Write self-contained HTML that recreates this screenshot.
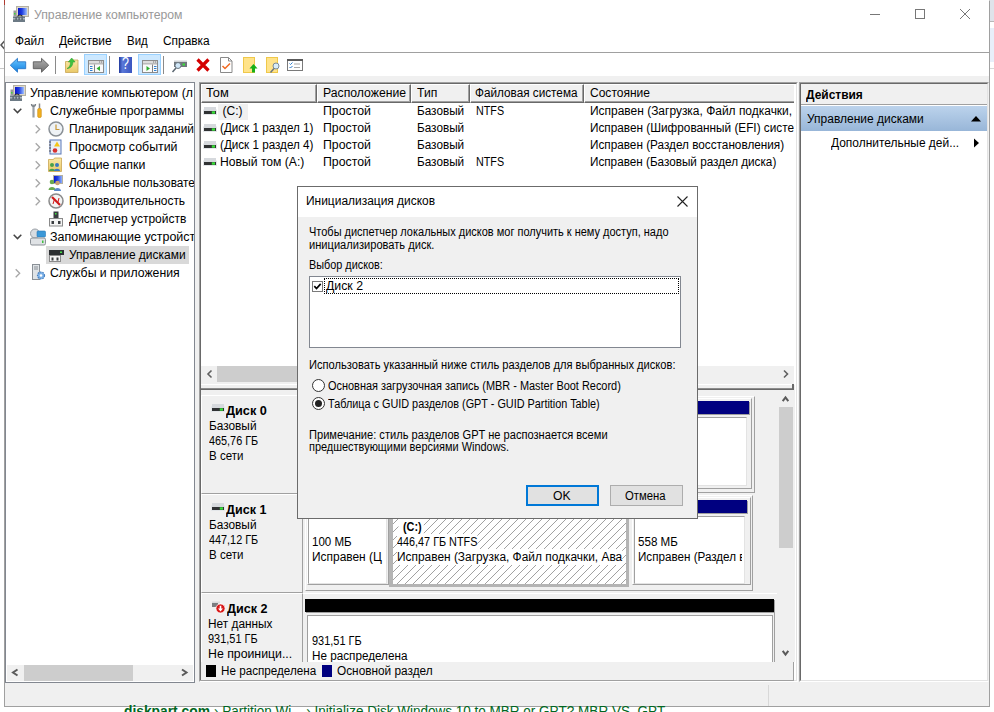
<!DOCTYPE html>
<html lang="ru"><head><meta charset="utf-8"><title>Управление компьютером</title>
<style>
html,body{margin:0;padding:0}
body{width:994px;height:712px;overflow:hidden;background:#fff;position:relative;font-family:"Liberation Sans",sans-serif;font-size:12px;color:#000}
div,span,svg{position:absolute;box-sizing:border-box}
.t{white-space:nowrap;line-height:16px;transform-origin:0 50%;font-size:12px}
.ttl{color:#999}
.b{font-weight:bold}
.d{font-size:12px}
.g{font-size:14px;color:#006621}
.gb{font-weight:bold}
.c{overflow:hidden}
.f0{background:#f0f0f0}
.sunk{border:1px solid;border-color:#a0a0a0 #fff #fff #a0a0a0}
.sunk2{border:1px solid;border-color:#696969 #e3e3e3 #e3e3e3 #696969}
.hl{background:#f0f0f0;border-right:1px solid #a0a0a0}
.hc{background:#f0f0f0;border:1px solid;border-color:#fff #696969 #696969 #fff;box-shadow:inset -1px -1px 0 #a0a0a0}
.thumb{background:#cdcdcd}
.navy{background:#000080}
</style></head><body>
<!-- background outside the window -->
<div style="left:990px;top:0;width:4px;height:22px;background:#dfe3ea;border-bottom:1px solid #b8b8b8"></div>
<div style="left:990px;top:28px;width:4px;height:34px;background:#e8effa"></div>
<div style="left:990px;top:68px;width:4px;height:1px;background:#d8d8d8"></div>
<div style="left:0;top:68px;width:4px;height:1px;background:#c8c8c8"></div>
<svg style="left:0;top:40px;width:4px;height:10px" viewBox="0 0 4 10"><path d="M4.500 1L1 5l3.500 4" stroke="#555" stroke-width="1.500" fill="none"/></svg>
<!-- window -->
<div id="win" style="left:4px;top:0;width:986px;height:707px;border:1px solid #a0a0a0;border-top-color:#fff;background:#fff"></div>
<div style="left:4px;top:0;width:1px;height:5px;background:#b03a30"></div>
<div style="left:5px;top:52px;width:984px;height:1px;background:#a0a0a0"></div>
<div class="f0" style="left:5px;top:76px;width:984px;height:630px"></div>
<!-- window controls -->
<svg style="left:860px;top:0;width:130px;height:30px" viewBox="0 0 130 30"><g stroke="#777" stroke-width="1" fill="none"><path d="M10 14.5h10"/><rect x="55.5" y="9.5" width="9" height="9"/><path d="M100 9l10 10M110 9l-10 10"/></g></svg>
<!-- tree panel -->
<div style="left:5px;top:82px;width:190px;height:601px;border:1px solid #828790;background:#fff"></div>
<div style="left:46px;top:246px;width:143px;height:18px;background:#d9d9d9"></div>
<div class="f0" style="left:7px;top:665px;width:186px;height:16px"></div>
<div class="thumb" style="left:24px;top:665px;width:109px;height:16px"></div>
<svg style="left:7px;top:665px;width:186px;height:16px" viewBox="0 0 186 16"><g stroke="#5a5a5a" stroke-width="2" fill="none"><path d="M10.500 4.500L6 7.500l4.500 3"/><path d="M175 4.500l4.500 3-4.500 3"/></g></svg>
<!-- middle panel -->
<div class="sunk" style="left:199px;top:82px;width:599px;height:600px"></div>
<div class="sunk2" style="left:200px;top:83px;width:597px;height:598px;background:#fff"></div>
<!-- table header -->
<div class="c" style="left:201px;top:84px;width:593px;height:19px">
<div class="hc" style="left:0px;top:0;width:116px;height:19px"></div>
<div class="hc" style="left:116px;top:0;width:94px;height:19px"></div>
<div class="hc" style="left:210px;top:0;width:59px;height:19px"></div>
<div class="hc" style="left:269px;top:0;width:114px;height:19px"></div>
<div class="hc" style="left:383px;top:0;width:316px;height:19px"></div>
</div>
<div style="left:218px;top:104px;width:30px;height:16px;background:#f0f0f0"></div>
<!-- table h-scrollbar -->
<div class="f0" style="left:201px;top:366px;width:593px;height:18px"></div>
<div class="thumb" style="left:217px;top:366px;width:330px;height:16px"></div>
<svg style="left:201px;top:366px;width:593px;height:16px" viewBox="0 0 593 16"><g stroke="#606060" stroke-width="1.6" fill="none"><path d="M10.5 4.500L7 8l3.500 3.500"/><path d="M583 4.500l3.500 3.500L583 11.500"/></g></svg>
<!-- splitter -->
<div style="left:201px;top:384px;width:594px;height:7px;background:#f0f0f0;border-top:1px solid #fff"></div>
<div style="left:201px;top:388px;width:593px;height:2px;background:#696969;border-top:1px solid #8c8c8c"></div>
<div style="left:792px;top:384px;width:2px;height:6px;background:#696969"></div>
<!-- bottom pane -->
<div class="f0" style="left:201px;top:390px;width:594px;height:272px"></div>
<div id="bp" class="c" style="left:201px;top:390px;width:576px;height:272px">
 <!-- coordinates relative to (201,390) -->
 <!-- disk 0 -->
 <div style="left:0;top:5px;width:102px;height:99px;border:1px solid;border-color:#fff #a0a0a0 #a0a0a0 #fff"></div>
 <div style="left:426px;top:6px;width:128px;height:97px;border:1px solid;border-color:#fff #a0a0a0 #a0a0a0 #fff"></div>
 <div style="left:428px;top:8px;width:123px;height:91px;border:1px solid;border-color:#fff #a0a0a0 #a0a0a0 #fff"></div>
 <div class="navy" style="left:430px;top:11px;width:118px;height:13px;box-shadow:1px 1px 0 #a0a0a0"></div>
 <div style="left:430px;top:27px;width:116px;height:69px;background:#fff;border:1px solid;border-color:#a0a0a0 #e3e3e3 #e3e3e3 #a0a0a0"></div>
 <!-- disk 1 -->
 <div style="left:0;top:104px;width:102px;height:99px;border:1px solid;border-color:#fff #a0a0a0 #a0a0a0 #fff"></div>
 <div style="left:104px;top:105px;width:448px;height:96px;border:1px solid;border-color:#fff #a0a0a0 #a0a0a0 #fff"></div>
 <div style="left:106px;top:107px;width:82px;height:88px;border:1px solid;border-color:#fff #a0a0a0 #a0a0a0 #fff"></div>
 <div class="navy" style="left:108px;top:110px;width:77px;height:13px"></div>
 <div style="left:107px;top:126px;width:79px;height:68px;background:#fff;border:1px solid;border-color:#a0a0a0 #e3e3e3 #e3e3e3 #a0a0a0"></div>
 <div style="left:188px;top:106px;width:240px;height:91px;background:#b4b4b4"></div>
 <div class="navy" style="left:192px;top:110px;width:233px;height:13px"></div>
 <svg style="left:192px;top:126px;width:233px;height:68px" viewBox="0 0 233 68"><defs><pattern id="hat" width="8" height="8" patternUnits="userSpaceOnUse"><rect width="8" height="8" fill="#fff"/><path d="M-1 9L9 -1M-1 1L1 -1M7 9L9 7" stroke="#969696" stroke-width=".9"/></pattern></defs><rect width="233" height="68" fill="url(#hat)"/></svg>
 <div style="left:431px;top:107px;width:119px;height:88px;border:1px solid;border-color:#fff #a0a0a0 #a0a0a0 #fff"></div>
 <div class="navy" style="left:433px;top:110px;width:113px;height:13px;box-shadow:1px 1px 0 #a0a0a0"></div>
 <div style="left:433px;top:126px;width:111px;height:68px;background:#fff;border:1px solid;border-color:#a0a0a0 #e3e3e3 #e3e3e3 #a0a0a0"></div>
 <!-- disk 2 -->
 <div style="left:0;top:203px;width:102px;height:99px;border:1px solid;border-color:#fff #a0a0a0 #a0a0a0 #fff"></div>
 <div style="left:102px;top:203px;width:474px;height:1px;background:#fff"></div>
 <div style="left:104px;top:209px;width:469px;height:13px;background:#000;box-shadow:1px 1px 0 #a0a0a0"></div>
 <div style="left:106px;top:225px;width:466px;height:60px;background:#fff;border:1px solid;border-color:#a0a0a0 #a0a0a0 #e3e3e3 #a0a0a0"></div>
 <div style="left:573px;top:222px;width:1px;height:60px;background:#a0a0a0"></div>
</div>
<!-- v scrollbar -->
<div class="f0" style="left:778px;top:391px;width:17px;height:271px"></div>
<div class="thumb" style="left:779px;top:407px;width:14px;height:141px"></div>
<svg style="left:778px;top:391px;width:17px;height:271px" viewBox="0 0 17 271"><g stroke="#5a5a5a" stroke-width="2" fill="none"><path d="M4.700 10.200L7.500 6.400l2.800 3.800"/><path d="M4.700 259.800L7.500 263.600l2.800-3.800"/></g></svg>
<!-- legend -->
<div class="f0" style="left:201px;top:662px;width:593px;height:19px;border-right:1px solid #a0a0a0;border-bottom:1px solid #a0a0a0"></div>
<div style="left:206px;top:665px;width:10px;height:12px;background:#000"></div>
<div class="navy" style="left:322px;top:665px;width:10px;height:12px"></div>
<!-- actions panel -->
<div class="sunk" style="left:799px;top:82px;width:190px;height:600px;border-right-color:#f0f0f0"></div>
<div class="sunk2" style="left:800px;top:83px;width:188px;height:598px;background:#fff"></div>
<div class="f0" style="left:801px;top:84px;width:186px;height:21px;border-bottom:1px solid #a0a0a0"></div>
<div style="left:801px;top:106px;width:186px;height:25px;background:linear-gradient(#bcd3ec,#98b6d8)"></div>
<svg style="left:965px;top:110px;width:20px;height:40px" viewBox="0 0 20 40"><path d="M6 11.500h10l-5-5.500z" fill="#000"/><path d="M9 28.500v9l5-4.500z" fill="#000"/></svg>
<!-- status bar -->
<div style="left:768px;top:685px;width:1px;height:21px;background:#d8d8d8"></div>
<svg width="0" height="0" style="left:0;top:0"><defs>
<linearGradient id="scr" x1="0" y1="0" x2="1" y2="0"><stop offset="0" stop-color="#0a12c8"/><stop offset=".45" stop-color="#1f3fe0"/><stop offset="1" stop-color="#9fc0ff"/></linearGradient>
<linearGradient id="bl" x1="0" y1="0" x2="0" y2="1"><stop offset="0" stop-color="#6cc6ff"/><stop offset="1" stop-color="#0f7fe0"/></linearGradient>
<linearGradient id="gr" x1="0" y1="0" x2="0" y2="1"><stop offset="0" stop-color="#b0b0b0"/><stop offset="1" stop-color="#707070"/></linearGradient>
<linearGradient id="fold" x1="0" y1="0" x2="0" y2="1"><stop offset="0" stop-color="#fbe9a8"/><stop offset="1" stop-color="#e9c867"/></linearGradient>
<linearGradient id="hlp" x1="0" y1="0" x2="1" y2="0"><stop offset="0" stop-color="#20389c"/><stop offset=".25" stop-color="#5a78d8"/><stop offset="1" stop-color="#3a55c0"/></linearGradient>
<g id="cm"><rect x="3.500" y=".5" width="12" height="10" fill="#dcd8cc" stroke="#b4b0a2"/><rect x="5" y="2" width="9" height="7" fill="url(#scr)"/><rect x=".5" y="4.500" width="2.500" height="6" fill="#9a9a9a"/><rect x="1" y="7" width="1.500" height="1.500" fill="#3fd23f"/><path d="M4.500 10.500q2.500-3 5 0" stroke="#222" stroke-width="1.200" fill="none"/><rect x="0" y="10.500" width="12" height="5.500" fill="#6c7a85"/><rect x="0" y="12" width="12" height="1.500" fill="#aeb8c0"/><rect x="2.500" y="11.500" width="1.200" height="2.500" fill="#4a5660"/><rect x="5.500" y="11.500" width="1.200" height="2.500" fill="#4a5660"/><rect x="8.500" y="11.500" width="1.200" height="2.500" fill="#4a5660"/></g>
<g id="dsk"><rect x="0" y="2.500" width="14" height="5.500" fill="#e4e7ea"/><rect x="1" y="0" width="12" height="4" fill="#d6d9dd"/><rect x="1" y="4" width="12" height="3" fill="#303234"/><rect x="8.800" y="4.300" width="3.200" height="2.400" fill="#38e038"/></g>
<g id="chv" fill="none" stroke="#444" stroke-width="1.500"><path d="M.7.800L4.500 4.600 8.300.8"/></g>
<g id="chr" fill="none" stroke="#a6a6a6" stroke-width="1.300"><path d="M.7.700L4.700 4.700.7 8.700"/></g>
<g id="tw1"><rect x="0" y="0" width="15" height="12" fill="#fafafa" stroke="#8c8c8c"/><rect x=".5" y=".5" width="14" height="2.500" fill="#dcdcdc"/><rect x="10.500" y="1" width="1.200" height="1" fill="#777"/><rect x="12.500" y="1" width="1.200" height="1" fill="#777"/><rect x="0" y="3" width="15" height=".8" fill="#8c8c8c"/></g>
</defs></svg>
<!-- title icon -->
<svg style="left:13px;top:6px;width:16px;height:16px" viewBox="0 0 16 16"><use href="#cm"/></svg>
<!-- toolbar -->
<svg style="left:5px;top:53px;width:310px;height:23px" viewBox="5 53 310 23">
<path d="M10.300 65.200L17.500 58.300V61.800H25.700V68.700H17.500V72.200z" fill="url(#bl)" stroke="#2a78c8" stroke-width=".9" stroke-linejoin="round"/>
<path d="M48.700 65.200L41.500 58.300V61.800H33.300V68.700H41.500V72.200z" fill="url(#gr)" stroke="#5c5c5c" stroke-width=".9" stroke-linejoin="round"/>
<rect x="55" y="56" width="1" height="18" fill="#8a8a8a"/>
<path d="M65.500 61.500h5l1-1.500h6.500v12.500h-12.500z" fill="url(#fold)" stroke="#c9a653" stroke-width=".8"/>
<path d="M67 68.500c2.500-1 3.500-3.500 3.500-6.500h-2.200l3.400-4 3.400 4h-2.200c0 4-2.500 6.500-5.900 6.500z" fill="#3fc23f" stroke="#2a9a2a" stroke-width=".5"/>
<rect x="84.500" y="54.500" width="22" height="20" fill="#cce8ff" stroke="#99d1ff"/>
<g transform="translate(88.500 60.500)"><use href="#tw1"/><rect x="5.500" y="4" width="1" height="8" fill="#808080"/><rect x="1.500" y="5.500" width="2.500" height="1" fill="#2f7fd0"/><rect x="1.500" y="7.500" width="2.500" height="1" fill="#2f7fd0"/><rect x="1.500" y="9.500" width="2.500" height="1" fill="#2f7fd0"/><path d="M11.500 5.500v5L8 8z" fill="#2fae2f"/></g>
<rect x="109" y="56" width="1" height="18" fill="#8a8a8a"/>
<rect x="119" y="57" width="13" height="16" fill="url(#hlp)"/>
<rect x="138.500" y="54.500" width="22" height="20" fill="#cce8ff" stroke="#99d1ff"/>
<g transform="translate(142.500 60.500)"><use href="#tw1"/><rect x="9.500" y="4" width="1" height="8" fill="#808080"/><rect x="11.500" y="5.500" width="2.500" height="1" fill="#2f7fd0"/><rect x="11.500" y="7.500" width="2.500" height="1" fill="#2f7fd0"/><rect x="11.500" y="9.500" width="2.500" height="1" fill="#2f7fd0"/><path d="M4 5.500v5L7.500 8z" fill="#2fae2f"/></g>
<rect x="163" y="56" width="1" height="18" fill="#8a8a8a"/>
<!-- connect -->
<rect x="174" y="60.500" width="13" height="2" fill="#d0d3d6"/><rect x="174" y="62" width="13" height="5" fill="#70767c"/><rect x="182.500" y="63.500" width="2.500" height="2" fill="#38e038"/>
<circle cx="178" cy="65.500" r="3" fill="#cfe6f7" stroke="#6a7680" stroke-width="1"/><path d="M176 68l-3.500 4" stroke="#5a6670" stroke-width="1.500"/>
<!-- red x -->
<path d="M197.500 59.500L208.500 70.500M208.500 59.500L197.500 70.500" stroke="#d40000" stroke-width="3.200"/>
<!-- doc check -->
<path d="M220.500 57.500h8l3.500 3.500v11.500h-11.500z" fill="#fff" stroke="#8a8a8a"/><path d="M228.500 57.500v3.500h3.500" fill="none" stroke="#8a8a8a"/><path d="M222.500 66l2.500 2.500 5-5" fill="none" stroke="#f26a21" stroke-width="1.500"/>
<!-- yellow page up -->
<rect x="243.500" y="57.500" width="11" height="15" fill="#ffe38a" stroke="#efc84a"/><path d="M252 72.500v-4h-2.500l4-4.500 4 4.500H255v4z" fill="#18b018"/>
<!-- yellow page search -->
<rect x="266.500" y="57.500" width="11" height="15" fill="#ffe38a" stroke="#efc84a"/><circle cx="276" cy="66" r="3" fill="#d8ecfa" stroke="#7a8a96"/><path d="M274 68.500l-3.500 4" stroke="#6a7680" stroke-width="1.500"/>
<!-- list -->
<rect x="287.500" y="59.500" width="15" height="11" fill="#fff" stroke="#7a7a7a"/><rect x="287" y="59" width="16" height="2" fill="#5a5a5a"/><path d="M289.500 63.500l1 1 2-2M289.500 67l1 1 2-2" fill="none" stroke="#2f7fd0" stroke-width="1"/><rect x="294" y="63.500" width="6" height="1" fill="#a8a8a8"/><rect x="294" y="67" width="6" height="1" fill="#a8a8a8"/>
</svg>
<span class="t" style="left:122.200px;top:56.400px;color:#fff;font-size:16px;line-height:16px;transform:scaleX(.78)">?</span>
<!-- tree icons -->
<svg style="left:7px;top:84px;width:70px;height:200px" viewBox="7 84 70 200">
<g transform="translate(10 85)"><use href="#cm"/></g>
<g transform="translate(13 108)"><use href="#chv"/></g>
<!-- tools -->
<path d="M33.500 104.500v13" stroke="#9aa0a6" stroke-width="2.200"/><path d="M31.500 104c0 3 4 3 4 0" stroke="#7a8086" stroke-width="1.300" fill="none"/>
<path d="M39.500 103.500v5" stroke="#8a8a8a" stroke-width="1.500"/><rect x="37.700" y="108.500" width="3.600" height="9" rx="1.200" fill="#f2b01e" stroke="#c88a10" stroke-width=".6"/>
<g transform="translate(35 124.500)"><use href="#chr"/></g>
<circle cx="56" cy="129" r="7" fill="#eef2f6" stroke="#8a9096" stroke-width="1.500"/><path d="M56 124.500v5h3.500" fill="none" stroke="#c89838" stroke-width="1.200"/>
<g transform="translate(35 142.500)"><use href="#chr"/></g>
<rect x="50" y="140" width="11" height="14" fill="#e8eef8" stroke="#5a78b8"/><rect x="49" y="141.500" width="2" height="1" fill="#555"/><rect x="49" y="144.500" width="2" height="1" fill="#555"/><rect x="49" y="147.500" width="2" height="1" fill="#555"/><rect x="49" y="150.500" width="2" height="1" fill="#555"/><path d="M57 141.500l3 5h-6z" fill="#f5c518"/><circle cx="55" cy="150.500" r="2.300" fill="#d83030"/>
<g transform="translate(35 160.500)"><use href="#chr"/></g>
<path d="M48.500 159.500h5l1-1.500h7v13.500h-13z" fill="url(#fold)" stroke="#c9a653" stroke-width=".8"/><circle cx="52" cy="165" r="2" fill="#4aa04a"/><path d="M49 171c0-3 6-3 6 0z" fill="#4aa04a"/><circle cx="57" cy="165" r="2" fill="#3a78c0"/><path d="M54 171c0-3 6-3 6 0z" fill="#3a78c0"/>
<g transform="translate(35 178.500)"><use href="#chr"/></g>
<rect x="53.500" y="175.500" width="9" height="8" fill="url(#scr)" stroke="#b4b0a2"/><circle cx="52" cy="182" r="2.300" fill="#6aa84f"/><path d="M48.500 190c0-4 7-4 7 0z" fill="#6aa84f"/><circle cx="57.500" cy="183" r="2.300" fill="#c8a070"/><path d="M54 191c0-4 7-4 7 0z" fill="#5a88c8"/>
<g transform="translate(35 196.500)"><use href="#chr"/></g>
<circle cx="56" cy="201" r="7" fill="#f4f4f4" stroke="#8a8a8a" stroke-width="1.500"/><path d="M52 197l8 8" stroke="#d01818" stroke-width="2.200"/><path d="M53 204l1.500-5M59 198l-1 4" stroke="#d01818" stroke-width="1"/>
<!-- device manager -->
<rect x="53.500" y="211.500" width="5" height="7" fill="#3a3d40"/><rect x="55" y="213" width="1.500" height="1.500" fill="#40e040"/><rect x="49.500" y="218.500" width="13" height="7.500" fill="#f4f4f4" stroke="#8a8a8a"/><rect x="51.500" y="221" width="2.500" height="3" fill="#3a3d40"/><rect x="58" y="221" width="2.500" height="3" fill="#3a3d40"/>
<g transform="translate(13 234)"><use href="#chv"/></g>
<!-- storage -->
<circle cx="35" cy="233.500" r="4.500" fill="#d8dce0" stroke="#9aa0a6"/><rect x="37" y="231" width="8.500" height="6" rx="1" fill="#3a98d8" stroke="#2a78b8" stroke-width=".6"/><rect x="30.500" y="238" width="15" height="7" rx="1.500" fill="#dfe2e5" stroke="#8a9096"/><rect x="42" y="240.500" width="1.500" height="2.500" fill="#40c040"/>
<!-- disk mgmt -->
<rect x="49" y="248" width="15" height="3" fill="#d8dadc"/><rect x="49" y="250" width="15" height="5" fill="#2c2f32"/><rect x="60" y="251.500" width="2" height="1.500" fill="#46e046"/><rect x="49.500" y="255.500" width="11" height="6" fill="#f4f4f4" stroke="#8a8a8a"/><rect x="51.500" y="257.500" width="2" height="3" fill="#3a3d40"/><rect x="56.500" y="257.500" width="2" height="3" fill="#3a3d40"/>
<g transform="translate(15 268.500)"><use href="#chr"/></g>
<!-- services -->
<rect x="32.500" y="264.500" width="7" height="15" fill="#dfe3e6" stroke="#8a9096"/><rect x="34" y="266.500" width="4" height="1" fill="#8a9096"/><rect x="34" y="268.500" width="4" height="1" fill="#8a9096"/><circle cx="41" cy="275.500" r="3.500" fill="#7ab0e8" stroke="#4a80c0" stroke-width="1.200" stroke-dasharray="1.500 1"/><circle cx="41" cy="275.500" r="1.300" fill="#fff"/>
</svg>
<!-- table disk icons -->
<svg style="left:203px;top:107px;width:14px;height:60px" viewBox="0 0 14 60"><use href="#dsk"/><g transform="translate(0 17)"><use href="#dsk"/></g><g transform="translate(0 34)"><use href="#dsk"/></g><g transform="translate(0 51)"><use href="#dsk"/></g></svg>
<!-- bottom label icons -->
<svg style="left:211px;top:404px;width:14px;height:8px" viewBox="0 0 14 8"><use href="#dsk"/></svg>
<svg style="left:211px;top:503px;width:14px;height:8px" viewBox="0 0 14 8"><use href="#dsk"/></svg>
<svg style="left:211px;top:600px;width:16px;height:14px" viewBox="0 0 16 14"><rect x="1" y="1.500" width="8" height="2" fill="#d8dadc"/><rect x="1" y="3" width="6" height="4" fill="#7a7d80"/><circle cx="9.500" cy="8.500" r="4.600" fill="#d81818" stroke="#fff" stroke-width=".8"/><path d="M8.700 5.800h1.600v2.700h1.700L9.500 11.400 7 8.500h1.700z" fill="#fff"/></svg>

<span class="t ttl" style="left:33.7px;top:6.7px;transform:scaleX(1.0207);">Управление компьютером</span>
<span class="t" style="left:14.8px;top:32.6px;transform:scaleX(0.9859);">Файл</span>
<span class="t" style="left:59.1px;top:32.6px;transform:scaleX(0.9988);">Действие</span>
<span class="t" style="left:127.0px;top:32.6px;transform:scaleX(0.9531);">Вид</span>
<span class="t" style="left:162.7px;top:32.6px;transform:scaleX(0.9920);">Справка</span>
<span class="t" style="left:205.5px;top:84.9px;transform:scaleX(1.0690);">Том</span>
<span class="t" style="left:322.5px;top:84.9px;transform:scaleX(1.0187);">Расположение</span>
<span class="t" style="left:416.8px;top:84.9px;transform:scaleX(1.0142);">Тип</span>
<span class="t" style="left:475.4px;top:84.9px;transform:scaleX(0.9788);">Файловая система</span>
<span class="t" style="left:589.8px;top:84.9px;transform:scaleX(1.0018);">Состояние</span>
<span class="t b" style="left:806.0px;top:87.1px;transform:scaleX(0.9954);">Действия</span>
<span class="t" style="left:807.2px;top:111.0px;transform:scaleX(0.9992);">Управление дисками</span>
<span class="t" style="left:831.2px;top:135.0px;transform:scaleX(0.9952);">Дополнительные дей...</span>
<span class="t" style="left:220.6px;top:663.0px;transform:scaleX(0.9728);">Не распределена</span>
<span class="t" style="left:337.1px;top:663.0px;transform:scaleX(0.9858);">Основной раздел</span>
<span class="t g gb" style="left:123.6px;top:703.1px;transform:scaleX(0.9858);">diskpart.com</span>
<span class="t g" style="left:213.7px;top:703.1px;transform:scaleX(0.9650);">› Partition Wi... › Initialize Disk Windows 10 to MBR or GPT? MBR VS. GPT</span>
<div class="c" style="left:7px;top:84px;width:187px;height:581px"><span class="t" style="left:23.1px;top:0.8px;transform:scaleX(1.0193);">Управление компьютером (л</span>
<span class="t" style="left:42.5px;top:18.8px;transform:scaleX(1.0228);">Служебные программы</span>
<span class="t" style="left:61.9px;top:36.8px;transform:scaleX(0.9881);">Планировщик заданий</span>
<span class="t" style="left:61.9px;top:54.8px;transform:scaleX(1.0298);">Просмотр событий</span>
<span class="t" style="left:61.9px;top:72.8px;transform:scaleX(1.0252);">Общие папки</span>
<span class="t" style="left:61.9px;top:90.8px;transform:scaleX(0.9825);">Локальные пользовате</span>
<span class="t" style="left:61.9px;top:108.8px;transform:scaleX(0.9967);">Производительность</span>
<span class="t" style="left:61.9px;top:126.8px;transform:scaleX(0.9998);">Диспетчер устройств</span>
<span class="t" style="left:42.5px;top:144.8px;transform:scaleX(1.0389);">Запоминающие устройств</span>
<span class="t" style="left:61.9px;top:162.8px;transform:scaleX(0.9975);">Управление дисками</span>
<span class="t" style="left:42.5px;top:180.8px;transform:scaleX(1.0219);">Службы и приложения</span></div>
<div class="c" style="left:201px;top:84px;width:593px;height:282px"><span class="t" style="left:21.6px;top:19.0px;transform:scaleX(1.0000);">(C:)</span>
<span class="t" style="left:122.0px;top:19.0px;transform:scaleX(1.0253);">Простой</span>
<span class="t" style="left:215.8px;top:19.0px;transform:scaleX(0.9798);">Базовый</span>
<span class="t" style="left:274.6px;top:19.0px;transform:scaleX(0.8965);">NTFS</span>
<span class="t" style="left:388.8px;top:19.0px;transform:scaleX(0.9968);">Исправен (Загрузка, Файл подкачки,</span>
<span class="t" style="left:18.9px;top:36.0px;transform:scaleX(0.9713);">(Диск 1 раздел 1)</span>
<span class="t" style="left:122.0px;top:36.0px;transform:scaleX(1.0253);">Простой</span>
<span class="t" style="left:215.8px;top:36.0px;transform:scaleX(0.9798);">Базовый</span>
<span class="t" style="left:388.8px;top:36.0px;transform:scaleX(0.9816);">Исправен (Шифрованный (EFI) систе</span>
<span class="t" style="left:18.9px;top:53.0px;transform:scaleX(0.9713);">(Диск 1 раздел 4)</span>
<span class="t" style="left:122.0px;top:53.0px;transform:scaleX(1.0253);">Простой</span>
<span class="t" style="left:215.8px;top:53.0px;transform:scaleX(0.9798);">Базовый</span>
<span class="t" style="left:388.8px;top:53.0px;transform:scaleX(0.9794);">Исправен (Раздел восстановления)</span>
<span class="t" style="left:18.9px;top:70.0px;transform:scaleX(1.0129);">Новый том (A:)</span>
<span class="t" style="left:122.0px;top:70.0px;transform:scaleX(1.0253);">Простой</span>
<span class="t" style="left:215.8px;top:70.0px;transform:scaleX(0.9798);">Базовый</span>
<span class="t" style="left:274.6px;top:70.0px;transform:scaleX(0.8965);">NTFS</span>
<span class="t" style="left:388.8px;top:70.0px;transform:scaleX(0.9764);">Исправен (Базовый раздел диска)</span></div>
<div class="c" style="left:201px;top:391px;width:576px;height:271px"><span class="t b" style="left:25.4px;top:12.0px;transform:scaleX(1.0589);">Диск 0</span>
<span class="t" style="left:7.5px;top:27.1px;transform:scaleX(0.9861);">Базовый</span>
<span class="t" style="left:7.5px;top:42.1px;transform:scaleX(0.9040);">465,76 ГБ</span>
<span class="t" style="left:7.5px;top:57.1px;transform:scaleX(0.9606);">В сети</span>
<span class="t b" style="left:25.4px;top:111.0px;transform:scaleX(1.0460);">Диск 1</span>
<span class="t" style="left:7.5px;top:126.1px;transform:scaleX(0.9861);">Базовый</span>
<span class="t" style="left:7.5px;top:141.1px;transform:scaleX(0.9040);">447,12 ГБ</span>
<span class="t" style="left:7.5px;top:156.1px;transform:scaleX(0.9606);">В сети</span>
<span class="t b" style="left:25.6px;top:210.0px;transform:scaleX(1.0485);">Диск 2</span>
<span class="t" style="left:7.3px;top:225.1px;transform:scaleX(0.9873);">Нет данных</span>
<span class="t" style="left:7.3px;top:240.1px;transform:scaleX(0.9132);">931,51 ГБ</span>
<span class="t" style="left:7.3px;top:255.1px;transform:scaleX(1.0251);">Не проиници...</span></div>
<div class="c" style="left:309px;top:517px;width:78px;height:67px"><span class="t" style="left:2.9px;top:17.1px;transform:scaleX(0.9628);">100 МБ</span>
<span class="t" style="left:2.9px;top:32.1px;transform:scaleX(0.9940);">Исправен (Ц</span></div>
<div class="c" style="left:394px;top:517px;width:231px;height:66px"><span class="t b" style="left:9.1px;top:2.1px;transform:scaleX(0.9053);background:#fff;box-shadow:-5px 0 0 #fff,2px 0 0 #fff;">(C:)</span>
<span class="t" style="left:2.5px;top:17.1px;transform:scaleX(0.9026);background:#fff;">446,47 ГБ NTFS</span>
<span class="t" style="left:2.5px;top:32.1px;transform:scaleX(0.9921);background:#fff;">Исправен (Загрузка, Файл подкачки, Ава</span></div>
<div class="c" style="left:636px;top:517px;width:106px;height:67px"><span class="t" style="left:1.7px;top:17.1px;transform:scaleX(0.9676);">558 МБ</span>
<span class="t" style="left:1.7px;top:32.1px;transform:scaleX(0.9700);">Исправен (Раздел в</span></div>
<div class="c" style="left:309px;top:616px;width:462px;height:46px"><span class="t" style="left:2.9px;top:17.1px;transform:scaleX(0.9132);">931,51 ГБ</span>
<span class="t" style="left:2.9px;top:32.1px;transform:scaleX(0.9749);">Не распределена</span></div>
<!-- dialog -->
<div id="dlg" style="left:297px;top:186px;width:401px;height:333px;border:1px solid #6b6b6b;background:#f0f0f0">
 <div style="left:0;top:0;width:399px;height:30px;background:#fff"></div>
 <svg style="left:375px;top:5px;width:20px;height:20px" viewBox="0 0 20 20"><path d="M4.500 4.500l10 10M14.500 4.500l-10 10" stroke="#222" stroke-width="1.100" fill="none"/></svg>
 <div style="left:11px;top:89px;width:372px;height:72px;background:#fff;border:1px solid #828790"></div>
 <div style="left:26px;top:91px;width:355px;height:16px;border:1px dotted #000"></div>
 <div style="left:14px;top:94px;width:11px;height:11px;background:#fff;border:1px solid #7a7a7a"></div>
 <svg style="left:14px;top:94px;width:11px;height:11px" viewBox="0 0 11 11"><path d="M2.300 5.200l2.200 2.300 4.200-4.600" stroke="#000" stroke-width="1.700" fill="none"/></svg>
 <div style="left:14px;top:192px;width:13px;height:13px;border-radius:50%;background:#fff;border:1px solid #333"></div>
 <div style="left:14px;top:210px;width:13px;height:13px;border-radius:50%;background:#fff;border:1px solid #333"></div>
 <div style="left:17px;top:213px;width:7px;height:7px;border-radius:50%;background:#222"></div>
 <div style="left:228px;top:298px;width:73px;height:21px;background:#e1e1e1;border:2px solid #0078d7"></div>
 <div style="left:312px;top:298px;width:73px;height:21px;background:#e1e1e1;border:1px solid #adadad"></div>
</div>
<span class="t" style="left:306.1px;top:193.0px;transform:scaleX(0.9958);">Инициализация дисков</span>
<span class="t d" style="left:308.6px;top:223.9px;transform:scaleX(0.9154);">Чтобы диспетчер локальных дисков мог получить к нему доступ, надо</span>
<span class="t d" style="left:308.6px;top:237.2px;transform:scaleX(0.9250);">инициализировать диск.</span>
<span class="t d" style="left:308.6px;top:257.1px;transform:scaleX(0.9038);">Выбор дисков:</span>
<span class="t" style="left:326.4px;top:277.6px;transform:scaleX(1.0251);">Диск 2</span>
<span class="t d" style="left:308.6px;top:356.6px;transform:scaleX(0.9258);">Использовать указанный ниже стиль разделов для выбранных дисков:</span>
<span class="t d" style="left:328.0px;top:377.5px;transform:scaleX(0.9110);">Основная загрузочная запись (MBR - Master Boot Record)</span>
<span class="t d" style="left:328.0px;top:395.6px;transform:scaleX(0.9039);">Таблица с GUID разделов (GPT - GUID Partition Table)</span>
<span class="t d" style="left:308.6px;top:426.6px;transform:scaleX(0.9241);">Примечание: стиль разделов GPT не распознается всеми</span>
<span class="t d" style="left:308.6px;top:439.1px;transform:scaleX(0.9118);">предшествующими версиями Windows.</span>
<span class="t d" style="left:553.4px;top:487.6px;transform:scaleX(1.0148);">OK</span>
<span class="t d" style="left:625.4px;top:487.6px;transform:scaleX(0.9405);">Отмена</span>
</body></html>
